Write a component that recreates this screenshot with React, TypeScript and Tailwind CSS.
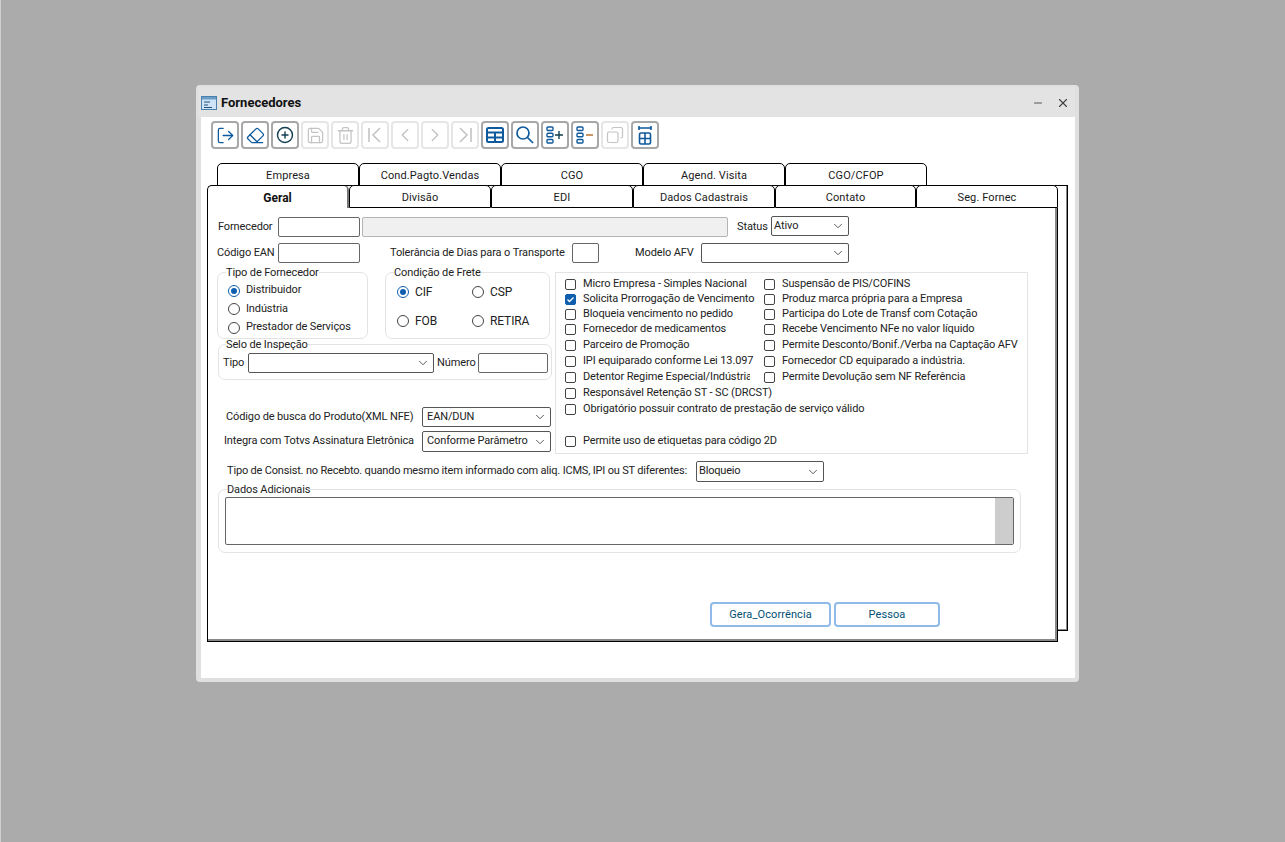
import React from "react";
import { ChevronDown, ChevronLeft, ChevronRight, CirclePlus, Copy, Eraser, LogOut, Minus, Save, Trash2, X } from "lucide-react";

const blue = "#0f5a9c";
const off = "#c4c4c4";

const ToolBtn: React.FC<{ disabled?: boolean; children: React.ReactNode }> = ({ disabled, children }) => (
  <div className={`w-[28px] h-[28px] flex items-center justify-center rounded-[4px] border-2 ${disabled ? "border-[#e6e6e6]" : "border-[#a8a8a8]"}`}>
    {children}
  </div>
);

const FirstIcon = ({ flip }: { flip?: boolean }) => (
  <svg width="20" height="20" viewBox="0 0 20 20" fill="none" stroke={off} strokeWidth="1.6" className={flip ? "-scale-x-100" : ""}>
    <path d="M4 3v14M15 3l-7 7 7 7" />
  </svg>
);

const TableIcon = () => (
  <svg width="20" height="20" viewBox="0 0 20 20" fill="none" stroke={blue} strokeWidth="2">
    <rect x="2" y="3" width="16" height="14" rx="1.5" />
    <path d="M2 7.5h16M2 12.5h16M10 7.5V17" />
  </svg>
);

const SearchIcon = () => (
  <svg width="20" height="20" viewBox="0 0 20 20" fill="none" stroke={blue} strokeWidth="1.7">
    <circle cx="8" cy="8" r="6" />
    <path d="M12.5 12.5L18 18" />
  </svg>
);

const ListIcon = ({ plus }: { plus?: boolean }) => (
  <svg width="22" height="20" viewBox="0 0 22 20" fill="none" strokeWidth="1.4">
    <rect x="3" y="2" width="6" height="3.5" rx="1" stroke={blue} />
    <rect x="3" y="8.2" width="6" height="3.5" rx="1" stroke={blue} />
    <rect x="3" y="14.5" width="6" height="3.5" rx="1" stroke={blue} />
    {plus ? <path d="M11 10h8M15 6v8" stroke="#123f50" /> : <path d="M12 10h7" stroke="#b8681e" />}
  </svg>
);

const ColumnsIcon = () => (
  <svg width="20" height="20" viewBox="0 0 20 20" fill="none" stroke={blue} strokeWidth="1.6">
    <path d="M4 1v4M16 1v4M4 3h12" />
    <rect x="4.5" y="8" width="11" height="11" rx="1.5" />
    <path d="M4.5 13.5h11M10 8v11" />
  </svg>
);

const Tab: React.FC<{ label: string; active?: boolean; w?: string }> = ({ label, active, w = "w-[142px]" }) => (
  <div
    className={`${w} h-full flex items-center justify-center border-t border-l border-r border-black rounded-t-[5px] bg-white ${
      active ? "pt-px font-bold text-[12px] text-[#111] border-r-2 border-r-[#777]" : "pt-[3px] text-[11px] tracking-[0.1px] text-[#1a1a1a] border-b border-b-black"
    }`}
  >
    {label}
  </div>
);

const Input: React.FC<{ w: string; grey?: boolean }> = ({ w, grey }) => (
  <div className={`${w} h-[20px] border border-[#666] rounded-[2px] ${grey ? "bg-[#f0f0f0] border-[#b4b4b4]" : "bg-white"}`} />
);

const Select: React.FC<{ w: string; value?: string; h?: string; pad?: string }> = ({ w, value, h = "h-[20px]", pad = "pl-[2px]" }) => (
  <div className={`${w} ${h} ${pad} flex items-center justify-between border border-[#555] rounded-[2px] bg-white pr-[3px] text-[#222] whitespace-nowrap`}>
    <span>{value}</span>
    <ChevronDown size={14} strokeWidth={1.5} color="#444" />
  </div>
);

const Radio: React.FC<{ on?: boolean }> = ({ on }) => (
  <span className={`w-[12px] h-[12px] shrink-0 rounded-full border flex items-center justify-center ${on ? "border-[#0f5fae]" : "border-[#444]"}`}>
    {on && <span className="w-[6px] h-[6px] rounded-full bg-[#0f5fae]" />}
  </span>
);

const Check: React.FC<{ label: string; on?: boolean; clip?: string }> = ({ label, on, clip }) => (
  <div className="flex items-center h-full">
    <span className={`w-[11px] h-[11px] shrink-0 rounded-[2px] border flex items-center justify-center ${on ? "bg-[#0f5fae] border-[#0f5fae]" : "border-[#444]"}`}>
      {on && (
        <svg width="9" height="9" viewBox="0 0 9 9" fill="none" stroke="white" strokeWidth="1.3">
          <path d="M1.5 4.5l2 2 4-4" />
        </svg>
      )}
    </span>
    <span className={`ml-[7px] whitespace-nowrap ${clip ?? ""}`}>{label}</span>
  </div>
);

const leftChecks = [
  { label: "Micro Empresa - Simples Nacional", h: "h-[15px]" },
  { label: "Solicita Prorrogação de Vencimento", h: "h-[15px]", on: true },
  { label: "Bloqueia vencimento no pedido", h: "h-[15px]" },
  { label: "Fornecedor de medicamentos", h: "h-[15px]" },
  { label: "Parceiro de Promoção", h: "h-[16px]" },
  { label: "IPI equiparado conforme Lei 13.097", h: "h-[16px]" },
  { label: "Detentor Regime Especial/Indústria", h: "h-[16px]", clip: "w-[167px] overflow-hidden" },
  { label: "Responsável Retenção ST - SC (DRCST)", h: "h-[16px]" },
  { label: "Obrigatório possuir contrato de prestação de serviço válido", h: "h-[16px]" },
  { label: "Permite uso de etiquetas para código 2D", h: "h-[16px] mt-[16px]" },
];

const rightChecks = [
  { label: "Suspensão de PIS/COFINS", h: "h-[15px]" },
  { label: "Produz marca própria para a Empresa", h: "h-[15px]" },
  { label: "Participa do Lote de Transf com Cotação", h: "h-[15px]" },
  { label: "Recebe Vencimento NFe no valor líquido", h: "h-[15px]" },
  { label: "Permite Desconto/Bonif./Verba na Captação AFV", h: "h-[16px]" },
  { label: "Fornecedor CD equiparado a indústria.", h: "h-[16px]" },
  { label: "Permite Devolução sem NF Referência", h: "h-[16px]" },
];

const App: React.FC = () => {
  return (
    <div className="w-full h-[842px] bg-[#ababab] pt-[85px] pl-[196px] border-l border-[#d0d0d0] overflow-hidden font-['Roboto',sans-serif] text-[11px] text-[#222]">
      {/* window */}
      <div className="w-[883px] h-[597px] -ml-px bg-white border-t-2 border-l-[5px] border-r-[4px] border-b-[4px] border-[#e0e0e0] rounded-[4px]">
        <div className="h-[30px] -ml-[3px] flex items-center justify-between bg-[#e3e3e3] pl-[3px] pr-[5px] pt-px">
          <div className="flex items-center gap-[4px]">
            <svg width="16" height="16" viewBox="0 0 16 16">
              <rect x="0.5" y="1.5" width="15" height="13" fill="#cfe4f7" stroke="#4a7fae" />
              <rect x="1" y="2" width="14" height="2.5" fill="#6c9cc8" />
              <path d="M3 7h6M3 10h4M3 12.5h8" stroke="#24527c" />
            </svg>
            <span className="font-bold text-[13px] text-[#111]">Fornecedores</span>
          </div>
          <div className="flex items-center gap-[12px]">
            <Minus size={12} color="#555" />
            <X size={14} color="#444" />
          </div>
        </div>

        {/* toolbar */}
        <div className="flex gap-[2px] pl-[10px] pt-[4px]">
          <ToolBtn><LogOut size={19} color={blue} strokeWidth={1.6} /></ToolBtn>
          <ToolBtn><Eraser size={19} color={blue} strokeWidth={1.6} /></ToolBtn>
          <ToolBtn><CirclePlus size={18} color="#123f50" strokeWidth={1.9} /></ToolBtn>
          <ToolBtn disabled><Save size={19} color={off} strokeWidth={1.6} /></ToolBtn>
          <ToolBtn disabled><Trash2 size={19} color={off} strokeWidth={1.6} /></ToolBtn>
          <ToolBtn disabled><FirstIcon /></ToolBtn>
          <ToolBtn disabled><ChevronLeft size={22} color={off} strokeWidth={1.5} /></ToolBtn>
          <ToolBtn disabled><ChevronRight size={22} color={off} strokeWidth={1.5} /></ToolBtn>
          <ToolBtn disabled><FirstIcon flip /></ToolBtn>
          <ToolBtn><TableIcon /></ToolBtn>
          <ToolBtn><SearchIcon /></ToolBtn>
          <ToolBtn><ListIcon plus /></ToolBtn>
          <ToolBtn><ListIcon /></ToolBtn>
          <ToolBtn disabled><Copy size={18} color={off} strokeWidth={1.6} className="-scale-x-100" /></ToolBtn>
          <ToolBtn><ColumnsIcon /></ToolBtn>
        </div>

        {/* page control */}
        <div className="relative mt-[14px] ml-[6px] w-[860px]">
          <div className="absolute left-[10px] top-[22px] w-[851px] h-[446px] border border-black bg-white shadow-[inset_-1px_-1px_0_#888]" />

          <div className="relative flex h-[23px] ml-[10px]">
            <Tab label="Empresa" />
            <Tab label="Cond.Pagto.Vendas" />
            <Tab label="CGO" />
            <Tab label="Agend. Visita" />
            <Tab label="CGO/CFOP" />
          </div>
          <div className="relative flex h-[23px] -mt-px w-[851px]">
            <Tab label="Geral" active />
            <Tab label="Divisão" />
            <Tab label="EDI" />
            <Tab label="Dados Cadastrais" />
            <Tab label="Contato" w="w-[141px]" />
            <Tab label="Seg. Fornec" w="w-[142px]" />
          </div>

          {/* active page */}
          <div className="relative w-[851px] h-[434px] bg-white border-l border-l-black border-r border-r-black border-b border-b-black shadow-[inset_-2px_-2px_0_#888] pt-[9px] whitespace-nowrap tracking-[-0.12px]">
            <div className="flex items-center h-[20px]">
              <span className="ml-[10px] w-[60px]">Fornecedor</span>
              <Input w="w-[82px]" />
              <div className="ml-[2px]"><Input w="w-[366px]" grey /></div>
              <span className="ml-[9px] w-[34px]">Status</span>
              <div className="mb-[2px]"><Select w="w-[78px]" value="Ativo" /></div>
            </div>
            <div className="flex items-center h-[20px] mt-[6px]">
              <span className="ml-[9px] w-[61px]">Código EAN</span>
              <Input w="w-[82px]" />
              <span className="ml-[30px] w-[182px]">Tolerância de Dias para o Transporte</span>
              <Input w="w-[27px]" />
              <span className="ml-[36px] w-[66px]">Modelo AFV</span>
              <Select w="w-[148px]" />
            </div>

            <div className="flex mt-[3px] ml-[9px]">
              {/* left side */}
              <div className="w-[338px]">
                <div className="flex gap-[17px] h-[73px]">
                  <fieldset className="w-[151px] h-[73px] border border-[#e3e3e3] rounded-[7px] pl-[11px]">
                    <legend className="-ml-[3px] px-0 leading-[13px]">Tipo de Fornecedor</legend>
                    <div className="flex items-center gap-[6px] h-[19px] -ml-[1px] mt-[2px]"><Radio on />Distribuidor</div>
                    <div className="flex items-center gap-[6px] h-[18px] -ml-[1px]"><Radio />Indústria</div>
                    <div className="flex items-center gap-[6px] h-[19px] -ml-[1px]"><Radio />Prestador de Serviços</div>
                  </fieldset>
                  <fieldset className="w-[165px] h-[73px] border border-[#e3e3e3] rounded-[7px] pl-[11px]">
                    <legend className="-ml-[3px] px-0 leading-[13px]">Condição de Frete</legend>
                    <div className="grid grid-cols-[75px_1fr] grid-rows-[29px_29px] -mt-[2px] text-[12px]">
                      <div className="flex items-center gap-[6px]"><Radio on />CIF</div>
                      <div className="flex items-center gap-[6px]"><Radio />CSP</div>
                      <div className="flex items-center gap-[6px]"><Radio />FOB</div>
                      <div className="flex items-center gap-[6px]"><Radio />RETIRA</div>
                    </div>
                  </fieldset>
                </div>
                <fieldset className="mt-[-1px] ml-[1px] w-[334px] h-[42px] border border-[#e3e3e3] rounded-[7px] pl-[4px]">
                  <legend className="ml-[3px] px-0 leading-[13px]">Selo de Inspeção</legend>
                  <div className="flex items-center mt-[2px]">
                    <span className="w-[25px]">Tipo</span>
                    <Select w="w-[186px]" />
                    <span className="ml-[3px] w-[41px]">Número</span>
                    <Input w="w-[70px]" />
                  </div>
                </fieldset>
                <div className="flex items-center h-[20px] mt-[27px] ml-[9px]">
                  <span className="w-[196px]">Código de busca do Produto(XML NFE)</span>
                  <Select w="w-[129px]" value="EAN/DUN" pad="pl-[4px]" />
                </div>
                <div className="flex items-center h-[21px] mt-[4px] ml-[7px]">
                  <span className="w-[198px]">Integra com Totvs Assinatura Eletrônica</span>
                  <Select w="w-[129px]" value="Conforme Parâmetro" h="h-[21px]" pad="pl-[4px]" />
                </div>
              </div>

              {/* check group */}
              <div className="w-[473px] h-[182px] mt-[6px] border border-[#e3e3e3] flex pl-[9px] pt-[4px]">
                <div className="w-[199px]">
                  {leftChecks.map((c) => (
                    <div key={c.label} className={c.h}>
                      <Check label={c.label} on={c.on} clip={c.clip} />
                    </div>
                  ))}
                </div>
                <div>
                  {rightChecks.map((c) => (
                    <div key={c.label} className={c.h}>
                      <Check label={c.label} />
                    </div>
                  ))}
                </div>
              </div>
            </div>

            <div className="flex items-center h-[21px] mt-[7px] ml-[19px] tracking-[-0.18px]">
              <span className="w-[469px]">Tipo de Consist. no Recebto. quando mesmo item informado com aliq. ICMS, IPI ou ST diferentes:</span>
              <Select w="w-[128px]" value="Bloqueio" h="h-[21px]" />
            </div>

            <fieldset className="mt-[1px] ml-[10px] w-[803px] h-[70px] border border-[#e3e3e3] rounded-[7px] px-[6px]">
              <legend className="ml-[2px] px-0 leading-[13px]">Dados Adicionais</legend>
              <div className="mt-px h-[48px] border border-[#666] rounded-[2px] flex justify-end">
                <div className="w-[18px] h-full bg-[#cdcdcd]" />
              </div>
            </fieldset>

            <div className="flex gap-[3px] mt-[49px] ml-[502px] text-[#004f73] tracking-[0.1px]">
              <div className="w-[121px] h-[25px] flex items-center justify-center pt-[2px] border-2 border-[#8fbbe8] rounded-[4px]">Gera_Ocorrência</div>
              <div className="w-[106px] h-[25px] flex items-center justify-center pt-[2px] border-2 border-[#8fbbe8] rounded-[4px]">Pessoa</div>
            </div>
          </div>
        </div>
      </div>
    </div>
  );
};

export default App;
